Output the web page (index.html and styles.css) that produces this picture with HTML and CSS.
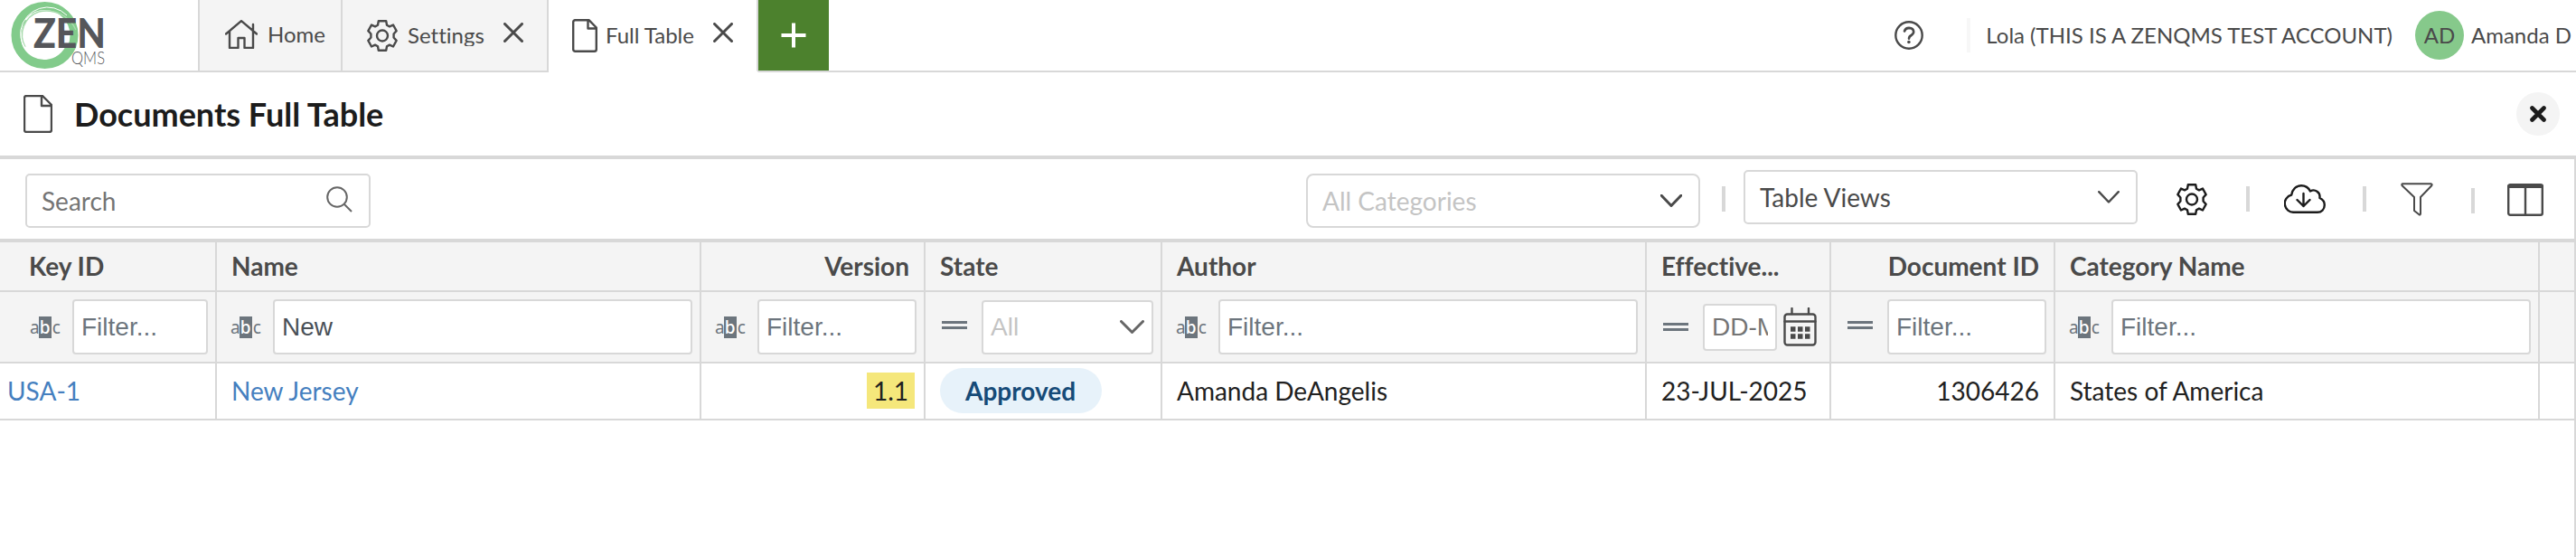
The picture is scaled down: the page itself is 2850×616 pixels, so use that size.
FILE: index.html
```html
<!DOCTYPE html>
<html lang="en">
<head>
  <meta charset="UTF-8" />
  <meta name="viewport" content="width=device-width, initial-scale=1.0"/>
  <title>Documents Full Table</title>
  <link rel="stylesheet" href="styles.css">
</head>
<body>
  <!-- shared icons -->
  <svg class="sprite" xmlns="http://www.w3.org/2000/svg">
    <symbol id="gear" viewBox="0 0 34 35">
      <path d="M12.8 1.2h8.4l.8 4.6 3 1.6 4-1.9 3.6 6.6-3 3.4v4l3 3.4-3.6 6.6-4-1.9-3 1.6-.8 4.6h-8.4l-.8-4.6-3-1.6-4 1.9-3.6-6.6 3-3.4v-4l-3-3.4L5 5.500l4 1.900 3-1.600z"/>
      <circle cx="17" cy="17.500" r="6"/>
    </symbol>
    <symbol id="file" viewBox="0 0 32 42">
      <path d="M3.500 1H21l10 10v27.500q0 2.500-2.500 2.500h-25Q1 41 1 38.500v-35Q1 1 3.500 1zM20 1v11h11"/>
    </symbol>
    <symbol id="cross" viewBox="0 0 22 22">
      <path d="M1.500 1.500l19 19M20.500 1.500l-19 19"/>
    </symbol>
    <symbol id="chevron" viewBox="0 0 24 14">
      <path d="M1.200 1.200L12 12.500 22.800 1.200"/>
    </symbol>
  </svg>

  <header class="topbar">
    <div class="logo">
      <svg width="120" height="78" viewBox="0 0 120 78">
        <circle cx="49.500" cy="39" r="32.500" fill="none" stroke="#82cb8b" stroke-width="9"/>
        <path d="M78 50A31 31 0 0 1 22 55A31 31 0 0 1 26 20" fill="none" stroke="#82cb8b" stroke-width="9"/>
        <path d="M84 33A36 36 0 0 0 43 13A27 27 0 0 0 28 52" fill="none" stroke="#a9dbae" stroke-width="1.500"/>
        <path d="M74 17A30 30 0 0 0 23 33A27 27 0 0 0 40 62" fill="none" stroke="#fff" stroke-width="1"/>
        <text class="logo-zen" x="37" y="53" textLength="80" lengthAdjust="spacingAndGlyphs">ZEN</text>
        <text class="logo-qms" x="79" y="71" textLength="37" lengthAdjust="spacingAndGlyphs">QMS</text>
      </svg>
    </div>

    <nav class="tabs">
      <div class="tab tab-home">
        <svg class="icon" width="36" height="32" viewBox="0 0 36 32"><path d="M1 15.500L18 1.200 35 15.500M5 12.500V31h9.500V20h7v11H31V12M31 12V5"/></svg>
        <span>Home</span>
      </div>
      <div class="tab tab-settings">
        <svg class="icon" width="34" height="35"><use href="#gear"/></svg>
        <span>Settings</span>
        <svg class="icon close" width="22" height="22"><use href="#cross"/></svg>
      </div>
      <div class="tab tab-table active">
        <svg class="icon" width="28" height="37" viewBox="0 0 28 37"><path d="M3 1.200h15.500l8.300 8.300V33.500q0 2.300-2.300 2.300H3.500q-2.300 0-2.300-2.300V3.500Q1.200 1.200 3.500 1.200zM17.500 1.200V10.500h9.300"/></svg>
        <span>Full Table</span>
        <svg class="icon close" width="22" height="22"><use href="#cross"/></svg>
      </div>
      <div class="tab-add">
        <svg width="28" height="28" viewBox="0 0 28 28"><path d="M14 .5v27M.5 14h27"/></svg>
      </div>
    </nav>

    <div class="account">
      <svg class="icon help" width="32" height="32" viewBox="0 0 32 32">
        <circle cx="16" cy="16" r="14.700"/>
        <path d="M11 11.500q1.200-3.600 5-3.600 5 .2 5.200 4.200 0 2.400-2.600 3.900-2.600 1.400-2.600 3.800" stroke-width="2.600"/>
        <circle cx="15.900" cy="23.500" r="1.800" class="dot"/>
      </svg>
      <div class="account-sep"></div>
      <span class="company">Lola (THIS IS A ZENQMS TEST ACCOUNT)</span>
      <div class="avatar">AD</div>
      <span class="user">Amanda D</span>
    </div>
  </header>

  <div class="titlebar">
    <svg class="icon" width="32" height="42"><use href="#file"/></svg>
    <h1>Documents Full Table</h1>
    <div class="round-close">
      <svg width="18" height="18" viewBox="0 0 18 18"><path d="M2.500 2.500l13 13M15.500 2.500l-13 13"/></svg>
    </div>
  </div>

  <main class="panel">
    <div class="toolbar">
      <div class="search">
        <span>Search</span>
        <svg width="29" height="29" viewBox="0 0 29 29"><circle cx="12" cy="12" r="10.800"/><path d="M19.500 19.500l8.500 8.500"/></svg>
      </div>
      <div class="select categories">
        <span>All Categories</span>
        <svg class="icon" width="24" height="14"><use href="#chevron"/></svg>
      </div>
      <div class="sep"></div>
      <div class="select views">
        <span>Table Views</span>
        <svg class="icon" width="24" height="14"><use href="#chevron"/></svg>
      </div>
      <svg class="icon dark tool-gear" width="34" height="35"><use href="#gear"/></svg>
      <div class="sep"></div>
      <svg class="icon dark tool-cloud" width="46" height="32" viewBox="0 0 46 32">
        <path d="M11 30.800a9.800 9.800 0 0 1-2.800-19.300C9 5.500 13.500 1.200 19 1.200c4.600 0 8.300 2.600 10 6.300 5-3 11.500 1 10.400 7.500 3.400 1.500 5.400 4.400 5.400 7.800 0 4.800-3.500 8-7.800 8z"/>
        <path d="M21.500 10v14M14.500 17l7 7 7-7"/>
      </svg>
      <div class="sep"></div>
      <svg class="icon tool-filter" width="36" height="37" viewBox="0 0 36 37"><path d="M2.200 1.300h31.600q1.400.6.500 2L22 16v18.500q-.2 1.600-1.600.8L15 31V16L1.600 3.300q-.9-1.400.6-2z" stroke-width="2"/></svg>
      <div class="sep low"></div>
      <svg class="icon tool-columns" width="40" height="36" viewBox="0 0 40 36"><rect x="1.200" y="1.200" width="37.600" height="33.600" rx="2"/><path d="M20 4v30"/><path d="M2 3h36" stroke-width="4"/></svg>
    </div>

    <table class="grid">
      <colgroup>
        <col class="c-key"><col class="c-wide"><col class="c-num"><col class="c-state"><col class="c-wide"><col class="c-date"><col class="c-num"><col class="c-wide"><col>
      </colgroup>
      <thead>
        <tr class="head">
          <th class="first">Key ID</th>
          <th>Name</th>
          <th class="right">Version</th>
          <th>State</th>
          <th>Author</th>
          <th>Effective...</th>
          <th class="right">Document ID</th>
          <th>Category Name</th>
          <th></th>
        </tr>
        <tr class="filters">
          <td class="first"><div class="filter"><span class="abc">a<b>b</b>c</span><input type="text" placeholder="Filter..."></div></td>
          <td><div class="filter"><span class="abc">a<b>b</b>c</span><input type="text" value="New"></div></td>
          <td><div class="filter"><span class="abc">a<b>b</b>c</span><input type="text" placeholder="Filter..."></div></td>
          <td>
            <div class="filter">
              <span class="equals"></span>
              <div class="state-select"><span>All</span><svg class="icon" width="27" height="15" viewBox="0 0 27 15"><path d="M1.500 1.500l12 12 12-12"/></svg></div>
            </div>
          </td>
          <td><div class="filter"><span class="abc">a<b>b</b>c</span><input type="text" placeholder="Filter..."></div></td>
          <td>
            <div class="filter date">
              <span class="equals"></span>
              <input type="text" placeholder="DD-MMM-YYYY">
              <svg class="icon calendar" width="37" height="43" viewBox="0 0 37 43">
                <rect x="1.500" y="7.500" width="34" height="34" rx="3"/>
                <path d="M1.500 15.500h34M9.500 1v6M28 1v6"/>
                <path d="M8 24h21.500M8 32h21.500" stroke-width="5.500" stroke-dasharray="5.500 2.500" stroke-linecap="butt"/>
              </svg>
            </div>
          </td>
          <td><div class="filter"><span class="equals"></span><input type="text" placeholder="Filter..."></div></td>
          <td><div class="filter"><span class="abc">a<b>b</b>c</span><input type="text" placeholder="Filter..."></div></td>
          <td></td>
        </tr>
      </thead>
      <tbody>
        <tr>
          <td class="key"><a>USA-1</a></td>
          <td><a>New Jersey</a></td>
          <td class="right"><mark>1.1</mark></td>
          <td><span class="badge">Approved</span></td>
          <td>Amanda DeAngelis</td>
          <td>23-JUL-2025</td>
          <td class="right">1306426</td>
          <td>States of America</td>
          <td></td>
        </tr>
      </tbody>
    </table>
  </main>
</body>
</html>
```
FILE: styles.css
```css
* {
  box-sizing: border-box;
}

body {
  font-family: Lato, sans-serif;
  font-size: 28px;
  font-variant-ligatures: none;
  margin: 0;
  height: 616px;
  overflow: hidden;
  background-color: #fff;
  color: #212121;
  display: flex;
  flex-direction: column;
}

svg {
  display: block;
  flex: none;
}

.sprite {
  position: absolute;
  width: 0;
  height: 0;
}

.icon {
  fill: none;
  stroke: #4a4a4a;
  stroke-width: 2.4;
  stroke-linejoin: round;
  stroke-linecap: round;
}

.icon.dark {
  stroke: #1c1c1c;
}

.icon .dot {
  fill: #4a4a4a;
  stroke: none;
}

/* top bar */
.topbar {
  display: flex;
  height: 80px;
  color: #4a4a4a;
  font-size: 24px;
}

.logo {
  width: 219px;
  border-bottom: 2px solid #d8d8d8;
}

.logo-zen {
  font-size: 45px;
  font-weight: 900;
  fill: #55565a;
}

.logo-qms {
  font-size: 20px;
  font-weight: 300;
  fill: #55565a;
}

.tabs {
  display: flex;
}

.tab {
  display: flex;
  align-items: center;
  background-color: #f4f4f4;
  border-right: 2px solid #d8d8d8;
  border-bottom: 2px solid #d8d8d8;
}

.tab span {
  line-height: 24px;
  overflow: hidden;
  white-space: nowrap;
}

.tab-home {
  width: 160px;
  border-left: 2px solid #d8d8d8;
  padding-left: 28px;
  gap: 11px;
  padding-bottom: 3px;
}

.tab-settings {
  width: 228px;
  padding-left: 27px;
  gap: 11px;
}

.tab-table {
  width: 232px;
  padding-left: 26px;
  gap: 9px;
}

.tab.active {
  background-color: #fff;
  border-bottom-color: #fff;
}

.tab .close {
  stroke-width: 3;
  margin: 0 26px 6px auto;
}

.tab-add {
  width: 78px;
  display: flex;
  align-items: center;
  justify-content: center;
  background-color: #4c812d;
  border-bottom: 2px solid #d8d8d8;
}

.tab-add svg {
  stroke: #fff;
  stroke-width: 4;
}

.account {
  flex: 1;
  display: flex;
  align-items: center;
  justify-content: flex-end;
  padding-right: 5px;
  white-space: nowrap;
  border-bottom: 2px solid #d8d8d8;
}

.account-sep {
  width: 4px;
  height: 38px;
  margin: 0 17px 0 48px;
  background-color: #f7f7f7;
}

.company,
.user {
  margin-bottom: 1px;
}

.avatar {
  width: 54px;
  height: 54px;
  line-height: 53px;
  margin: 0 8px 0 25px;
  border-radius: 50%;
  background-color: #86c98b;
  text-align: center;
}

/* page title */
.titlebar {
  display: flex;
  align-items: center;
  height: 96px;
  padding: 0 18px 0 26px;
  border-bottom: 4px solid #d8d8d8;
}

h1 {
  font-size: 36px;
  margin: 0 auto 0 24px;
  color: #1c1c1c;
}

.round-close {
  width: 48px;
  height: 48px;
  display: flex;
  align-items: center;
  justify-content: center;
  border-radius: 50%;
  background-color: #f4f4f4;
}

.round-close svg {
  stroke: #1c1c1c;
  stroke-width: 4.6;
  stroke-linecap: round;
}

/* toolbar */
.panel {
  flex: 1;
  border-right: 2px solid #d8d8d8;
}

.toolbar {
  display: flex;
  align-items: center;
  height: 92px;
  padding-left: 28px;
  border-bottom: 4px solid #d8d8d8;
}

.search,
.select {
  display: flex;
  align-items: center;
  justify-content: space-between;
  height: 60px;
  border: 2px solid #d8d8d8;
  border-radius: 5px;
}

.search {
  width: 382px;
  padding: 0 18px 0 16px;
  margin: 4px auto 0 0;
  color: #757575;
}

.search svg {
  fill: none;
  stroke: #666;
  stroke-width: 2;
  margin-bottom: 4px;
}

.categories {
  width: 436px;
  margin-top: 4px;
  padding: 0 18px 0 16px;
  border-radius: 8px;
  color: #c4c4c4;
}

.categories .icon {
  stroke-width: 3;
}

.views {
  width: 436px;
  margin: -4px 43px 0 -4px;
  padding: 0 18px 0 16px;
  color: #4a4a4a;
}

.sep {
  width: 4px;
  height: 28px;
  margin: 0 24px;
  background-color: #d8d8d8;
}

.sep.low {
  margin: 4px 36px 0 18px;
}

.tool-gear {
  margin-right: 19px;
}

.tool-cloud {
  margin: 0 17px 0 14px;
}

.tool-filter {
  margin: 0 24px 0 14px;
}

.tool-columns {
  margin: 2px 34px 0 0;
}

/* table */
.grid {
  width: 2848px;
  table-layout: fixed;
  border-collapse: separate;
  border-spacing: 0;
}

.c-key { width: 240px; }
.c-wide { width: 536px; }
.c-num { width: 248px; }
.c-state { width: 262px; }
.c-date { width: 204px; }

th,
td {
  height: 63px;
  padding: 0 16px 2px;
  text-align: left;
  white-space: nowrap;
  border-right: 2px solid #d8d8d8;
  border-bottom: 2px solid #d8d8d8;
}

th:last-child,
td:last-child {
  border-right: none;
}

.right {
  text-align: right;
}

.head th {
  height: 55px;
  background-color: #f4f4f4;
  color: #4a4a4a;
}

th.first {
  padding-left: 32px;
}

.filters td {
  height: 79px;
  padding: 0 8px 0 16px;
  background-color: #f4f4f4;
}

.filters td.first {
  padding-left: 34px;
}

.filter {
  display: flex;
  align-items: center;
}

.filter input {
  flex: 1;
  min-width: 0;
  height: 61px;
  padding: 0 8px;
  border: 2px solid #d8d8d8;
  border-radius: 4px;
  background-color: #fff;
  font-family: "Liberation Sans", Arial, sans-serif;
  font-size: 28px;
  color: #495057;
}

.filter input::placeholder {
  color: #6c757d;
}

.filter.date input {
  flex: none;
  width: 82px;
  height: 52px;
}

.filter.date input::placeholder {
  color: #757575;
}

.calendar {
  margin-left: 7px;
}

.abc {
  width: 47px;
  margin-left: -1px;
  display: flex;
  flex: none;
  font-family: "Noto Sans", sans-serif;
  font-size: 19px;
  line-height: 24px;
  color: #6c757d;
}

.abc b {
  width: 14px;
  margin: 0 1px 0 -1px;
  text-align: center;
  font-weight: 500;
  color: #fff;
  background-color: #6c757d;
}

.equals {
  width: 28px;
  height: 9px;
  margin: 0 16px 4px 2px;
  border: solid #6c757d;
  border-width: 3px 0;
}

.filter.date .equals {
  margin-bottom: 0;
}

.state-select {
  flex: 1;
  height: 60px;
  display: flex;
  align-items: center;
  justify-content: space-between;
  padding: 0 8px;
  border: 2px solid #d8d8d8;
  border-radius: 4px;
  background-color: #fff;
  color: #c4c4c4;
  font-family: "Liberation Sans", Arial, sans-serif;
}

.state-select .icon {
  stroke: #666;
  stroke-width: 3;
}

/* rows */
td.key {
  padding-left: 8px;
}

a {
  color: #457fbf;
}

mark {
  display: inline-block;
  height: 40px;
  line-height: 40px;
  padding: 0 7px;
  margin-right: -6px;
  background-color: #f5e77b;
  color: #212121;
  vertical-align: middle;
}

.badge {
  display: inline-block;
  height: 50px;
  line-height: 50px;
  padding: 0 29px 0 28px;
  border-radius: 25px;
  background-color: #e7f2fa;
  color: #164b78;
  font-weight: bold;
  vertical-align: middle;
}
```
